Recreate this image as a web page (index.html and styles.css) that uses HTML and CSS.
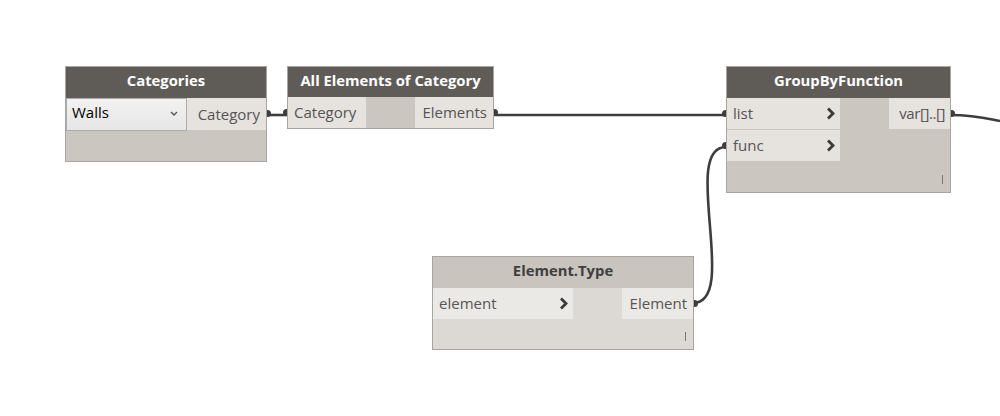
FILE: index.html
```html
<!DOCTYPE html>
<html>
<head>
<meta charset="utf-8">
<link rel="stylesheet" href="styles.css">
</head>
<body>
<div class="canvas">
  <svg class="wires" width="1000" height="416" viewBox="0 0 1000 416">
    <path d="M266 115 L287 115"/>
    <path d="M493 115 L726 115"/>
    <path d="M693 303 C740 303 680 147 726 147"/>
    <path d="M950 115 C975 115 985 118 1000 121"/>
  </svg>

  <div class="node n-categories">
    <div class="head">Categories</div>
    <div class="row">
      <div class="dropdown"><span>Walls</span><svg class="caret" width="8" height="5" viewBox="0 0 8 5"><path d="M1 1 L4 4 L7 1"/></svg></div>
      <div class="port out w79">Category<i class="pin pin-r"></i></div>
    </div>
    <div class="foot"></div>
  </div>

  <div class="node n-allelems">
    <div class="head">All Elements of Category</div>
    <div class="row">
      <div class="port in w78"><i class="pin pin-l"></i>Category</div>
      <div class="gap"></div>
      <div class="port out w78">Elements<i class="pin pin-r"></i></div>
    </div>
  </div>

  <div class="node n-group">
    <div class="head">GroupByFunction</div>
    <div class="cols">
      <div class="inputs">
        <div class="port in w113"><i class="pin pin-l"></i>list<svg class="chev" width="9" height="13" viewBox="0 0 9 13"><path d="M2 1.5 L7 6.5 L2 11.5"/></svg></div>
        <div class="port in w113 sep"><i class="pin pin-l"></i>func<svg class="chev" width="9" height="13" viewBox="0 0 9 13"><path d="M2 1.5 L7 6.5 L2 11.5"/></svg></div>
      </div>
      <div class="gap"></div>
      <div class="outputs">
        <div class="port out w61 tight">var[]..[]<i class="pin pin-r"></i></div>
      </div>
    </div>
    <div class="foot"><span class="bar"></span></div>
  </div>

  <div class="node light n-type">
    <div class="head">Element.Type</div>
    <div class="row">
      <div class="port in w140">element<svg class="chev" width="9" height="13" viewBox="0 0 9 13"><path d="M2 1.5 L7 6.5 L2 11.5"/></svg></div>
      <div class="gap"></div>
      <div class="port out w71">Element<i class="pin pin-r"></i></div>
    </div>
    <div class="foot"><span class="bar"></span></div>
  </div>
</div>
</body>
</html>
```

FILE: styles.css
```css
html, body {
  margin: 0;
  padding: 0;
  background: #ffffff;
}
.canvas {
  position: relative;
  width: 1000px;
  height: 416px;
  overflow: hidden;
  font-family: "Open Sans", "Noto Sans", sans-serif;
}
.wires {
  position: absolute;
  left: 0;
  top: 0;
}
.wires path {
  fill: none;
  stroke: #3d3d3d;
  stroke-width: 2.6;
}
.node {
  position: absolute;
  box-sizing: border-box;
  border: 1px solid #a8a5a0;
  background: #cbc7c0;
  display: flex;
  flex-direction: column;
}
.head {
  height: 31px;
  background: #5f5c58;
  color: #ffffff;
  font-weight: 700;
  font-size: 14.8px;
  display: flex;
  align-items: center;
  justify-content: center;
  padding-bottom: 5px;
  box-sizing: border-box;
}
.row, .cols {
  display: flex;
}
.inputs, .outputs {
  display: flex;
  flex-direction: column;
}
.gap {
  flex: 1;
}
.port {
  position: relative;
  box-sizing: border-box;
  height: 31px;
  background: #e6e2dd;
  color: #555555;
  font-size: 15px;
  display: flex;
  align-items: center;
  padding: 0 6px 1px 6px;
  white-space: nowrap;
}
.port.out {
  justify-content: flex-end;
}
.port.tight {
  letter-spacing: -0.4px;
  padding-right: 5px;
}
.port.sep {
  margin-top: 1px;
}
.chev {
  margin-left: auto;
  margin-right: -1px;
}
.chev path {
  fill: none;
  stroke: #3a3a3a;
  stroke-width: 2.8;
}
.w78 { width: 78px; }
.w79 { width: 79px; }
.w113 { width: 113px; }
.w61 { width: 61px; }
.w140 { width: 140px; }
.w71 { width: 71px; }
.pin {
  position: absolute;
  top: 12px;
  width: 4px;
  height: 7px;
  background: #3d3d3d;
}
.pin-r {
  right: -5px;
  border-radius: 0 4px 4px 0;
}
.pin-l {
  left: -5px;
  border-radius: 4px 0 0 4px;
}
.dropdown {
  box-sizing: border-box;
  width: 121px;
  height: 33px;
  border: 1px solid #acacac;
  background: linear-gradient(#f2f2f2, #e6e6e6);
  display: flex;
  align-items: flex-start;
  padding: 3px 8px 0 5px;
  font-size: 15px;
  color: #000;
}
.dropdown span {
  flex: 1;
}
.caret {
  margin-top: 9px;
}
.caret path {
  fill: none;
  stroke: #555;
  stroke-width: 1.4;
}
.foot {
  flex: 1;
  position: relative;
}
.bar {
  position: absolute;
  right: 7px;
  bottom: 8px;
  width: 1px;
  height: 9px;
  background: #777;
}

.n-categories {
  left: 65px;
  top: 66px;
  width: 202px;
  height: 96px;
}
.n-categories .port {
  height: 32px;
}
.n-allelems {
  left: 287px;
  top: 66px;
  width: 207px;
  height: 63px;
}
.n-group {
  left: 726px;
  top: 66px;
  width: 225px;
  height: 127px;
}
.n-type {
  left: 432px;
  top: 256px;
  width: 262px;
  height: 94px;
}
.light {
  background: #dcd9d4;
}
.light .head {
  background: #c9c4bd;
  color: #3f3f3f;
}
.light .port {
  background: #ebe9e6;
}
```
